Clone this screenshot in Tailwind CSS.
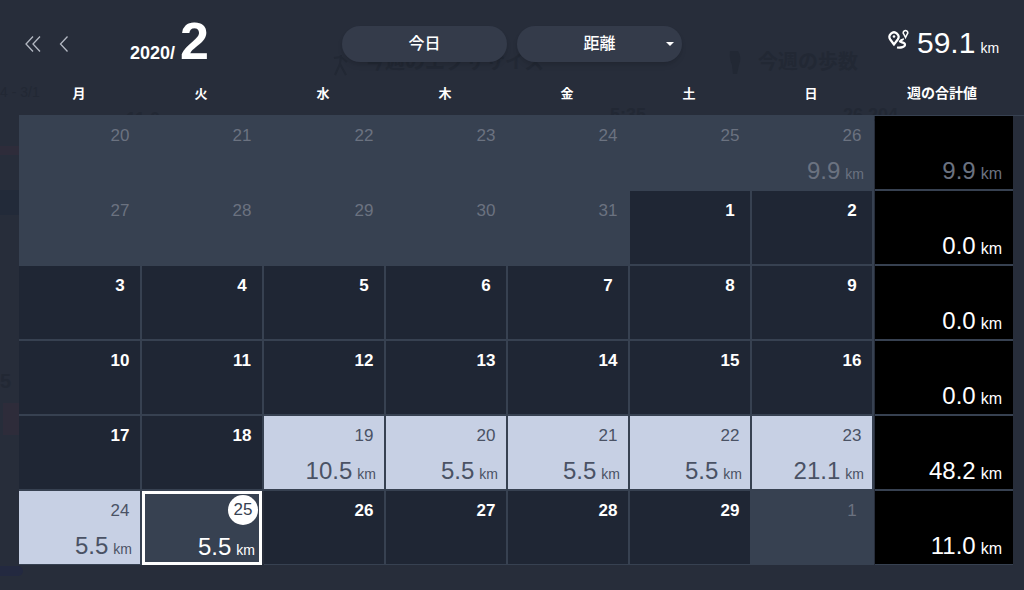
<!DOCTYPE html>
<html lang="ja">
<head>
  <meta charset="UTF-8">
  <title>カレンダー</title>
  <script src="https://cdn.jsdelivr.net/npm/@tailwindcss/browser@4"></script>
</head>
<body class="bg-[#272d3a] w-[1024px] h-[590px] overflow-hidden relative text-white font-['Liberation_Sans','Noto_Sans_CJK_JP',sans-serif]">

  <!-- dimmed page behind the calendar -->
  <div class="absolute left-[365px] top-[47px] text-[20px] font-bold text-[#222834]">今週のエクササイズ</div>
  <div class="absolute left-[758px] top-[47px] text-[20px] font-bold text-[#222834]">今週の歩数</div>
  <svg class="absolute left-[332px] top-[50px] w-[18px] h-[26px]" viewBox="0 0 18 26" fill="none" stroke="#222834" stroke-width="2"><path d="M9 5 8 14 3 25M8 14l6 11M2 8l7-1 6 5"/></svg>
  <svg class="absolute left-[728px] top-[50px] w-[14px] h-[26px]" viewBox="0 0 14 26" fill="#222834"><path d="M2 1h8q4 6 1 14l-2 9H5l-1-9Q1 8 2 1z"/></svg>
  <div class="absolute left-0 top-[82px] text-[14px] text-[#222834]">4 - 3/1</div>
  <div class="absolute left-[610px] top-[102px] text-[18px] font-bold text-[#222834]">5:35</div>
  <div class="absolute left-[843px] top-[102px] text-[18px] font-bold text-[#222834]">26,204</div>
  <div class="absolute left-[126px] top-[106px] text-[18px] font-bold text-[#222834]">11.0</div>
  <div class="absolute left-0 top-[146px] w-[19px] h-[9px] bg-[#2e2c3a]"></div>
  <div class="absolute left-0 top-[190px] w-[19px] h-[25px] bg-[#222a39]"></div>
  <div class="absolute left-0 top-[366px] text-[20px] font-bold text-[#222834]">5</div>
  <div class="absolute left-[3px] top-[403px] w-[16px] h-[32px] bg-[#2e2c3a]"></div>
  <div class="absolute left-0 top-[566px] w-[23px] h-[10px] rounded-r-md bg-[#232940]"></div>

  <div class="relative">
    <div class="h-[80px] flex items-center">
      <div class="w-[130px] h-[80px] pl-[25px] pt-[35px] flex items-start gap-[20px] shrink-0">
        <svg class="w-[16px] h-[18px]" viewBox="0 0 16 18" fill="none" stroke="#b4b9c3" stroke-width="1.3"><path d="M8 1.500 1 9l7 7.500M15 1.500 8 9l7 7.500"/></svg>
        <svg class="w-[10px] h-[18px] -ml-[2px]" viewBox="0 0 10 18" fill="none" stroke="#b4b9c3" stroke-width="1.3"><path d="M8.500 1.500 1.500 9l7 7.500"/></svg>
      </div>
      <div class="w-[212px] h-[80px] flex items-baseline shrink-0 pt-[11px] font-bold">
        <span class="text-[18px]">2020/</span>
        <span class="text-[52px] leading-[60px] ml-[5px]">2</span>
      </div>
      <button class="w-[165px] h-[36px] mt-[8px] rounded-full bg-[#343b4a] shadow-md text-[16px] font-medium">今日</button>
      <button class="relative w-[165px] h-[36px] mt-[8px] ml-[10px] rounded-full bg-[#343b4a] shadow-md text-[16px] font-medium">
        距離
        <span class="absolute right-[8px] top-[16px] border-x-[4px] border-t-[4px] border-x-transparent border-t-white"></span>
      </button>
      <div class="flex items-baseline mt-[5px] ml-[206px]">
        <svg class="w-[22px] h-[22px] self-center mr-[7px] -mt-[5px]" viewBox="0 0 22 22" fill="none" stroke="white" stroke-width="2.200">
          <path d="M6 15.500 2.300 10.500a4.500 4.500 0 1 1 7.400 0z"/>
          <circle cx="6" cy="7.500" r="1.300" fill="white" stroke="none"/>
          <path d="M17.500 8.500 15.700 5a2.200 2.200 0 1 1 3.600 0z" stroke-width="1.500"/>
          <path d="M15 9.500c.5 1.500-2.500 1.500-3 3 1 1 5 1 5 3 0 2.500-4 3.500-8 3" stroke-width="2.200"/>
        </svg>
        <span class="text-[30px]">59.1</span>
        <span class="text-[14px] ml-[5px]">km</span>
      </div>
    </div>

    <div class="ml-[18px] h-[35px] grid grid-cols-[repeat(7,122px)_140px] items-center pb-[8px] text-[13px] font-bold text-center">
      <div>月</div><div>火</div><div>水</div><div>木</div><div>金</div><div>土</div><div>日</div>
      <div class="text-[14px]">週の合計値</div>
    </div>

    <div id="cal" class="ml-[19px] h-[450px] overflow-hidden border-t border-[#374151] grid grid-cols-[123px_repeat(6,122px)_139px] auto-rows-[75px]"></div>
  </div>

  <script>
    // o = other month, r = day with a run, t = today
    const rows = [
      [[20,'o'],[21,'o'],[22,'o'],[23,'o'],[24,'o'],[25,'o'],[26,'o','9.9'],['9.9','dim']],
      [[27,'o'],[28,'o'],[29,'o'],[30,'o'],[31,'o'],[1],[2],['0.0']],
      [[3],[4],[5],[6],[7],[8],[9],['0.0']],
      [[10],[11],[12],[13],[14],[15],[16],['0.0']],
      [[17],[18],[19,'r','10.5'],[20,'r','5.5'],[21,'r','5.5'],[22,'r','5.5'],[23,'r','21.1'],['48.2']],
      [[24,'r','5.5'],[25,'t','5.5'],[26],[27],[28],[29],[1,'o'],['11.0']]
    ];

    const styles = {
      o: { cell: 'bg-[#374151]', num: 'text-[#6b7280] font-normal', dist: 'text-[#6b7280]' },
      r: { cell: 'bg-[#c7d0e4]', num: 'text-[#4a5264] font-normal', dist: 'text-[#4a5264]' },
      d: { cell: 'bg-[#1f2634]', num: 'text-white font-bold', dist: 'text-white' }
    };

    function kmLabel(value, color, right, unit) {
      return `<div class="absolute bottom-[1px] ${right} ${color} text-[24px] leading-[28px] whitespace-nowrap">${value}<span class="${unit} ml-[5px]">km</span></div>`;
    }

    document.getElementById('cal').innerHTML = rows.map(row => row.map((c, i) => {
      if (i === 7) {
        const color = c[1] === 'dim' ? 'text-[#6b7280]' : 'text-white';
        return `<div class="relative bg-black border-b-2 border-[#374151] ml-[1px]">${kmLabel(c[0], color, 'right-[11px]', 'text-[16px]')}</div>`;
      }
      if (c[1] === 't') {
        return `<div class="relative bg-[#374151] border-[3px] border-white mr-[2px] mb-[1px]">
          <div class="absolute right-[1px] top-[1px] w-[30px] h-[30px] rounded-full bg-white text-[#374151] text-[17px] flex items-center justify-center">${c[0]}</div>
          ${kmLabel(c[2], 'text-white', 'right-[4px]', 'text-[14px]').replace('bottom-[1px]', 'bottom-[-2px]')}
        </div>`;
      }
      const s = styles[c[1]] || styles.d;
      return `<div class="relative ${s.cell} border-r-2 border-b-2 border-[#374151]">
        <div class="absolute right-[5px] top-[8px] w-[30px] text-center text-[17px] leading-[24px] ${s.num}">${c[0]}</div>
        ${c[2] ? kmLabel(c[2], s.dist, 'right-[8px]', 'text-[14px]') : ''}
      </div>`;
    }).join('')).join('');
  </script>
</body>
</html>
